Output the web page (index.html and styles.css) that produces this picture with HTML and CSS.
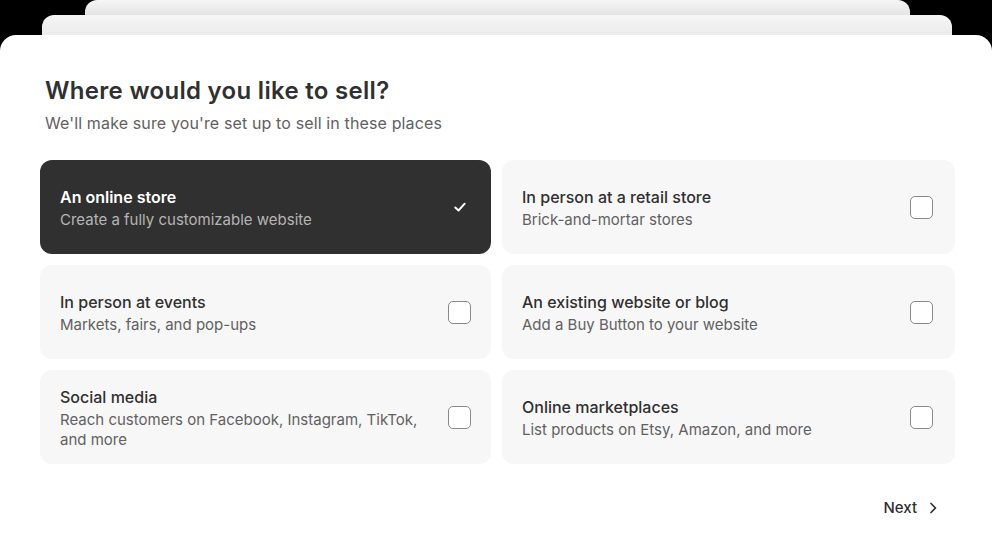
FILE: index.html
```html
<!DOCTYPE html>
<html>
<head>
<meta charset="utf-8">
<link rel="stylesheet" href="styles.css">
</head>
<body>
<div class="stack-back"></div>
<div class="stack-mid"></div>
<div class="sheet">
  <h1 class="title">Where would you like to sell?</h1>
  <p class="subtitle">We'll make sure you're set up to sell in these places</p>
  <div class="grid">
    <div class="option selected">
      <div class="text"><div class="name">An online store</div><div class="desc">Create a fully customizable website</div></div>
      <svg class="check" width="14" height="14" viewBox="0 0 14 14"><path d="M2.3 7.5 L5.5 10.5 L11.7 3.7" fill="none" stroke="#fff" stroke-width="2" stroke-linecap="round" stroke-linejoin="round"/></svg>
    </div>
    <div class="option">
      <div class="text"><div class="name">In person at a retail store</div><div class="desc">Brick-and-mortar stores</div></div>
      <span class="box"></span>
    </div>
    <div class="option">
      <div class="text"><div class="name">In person at events</div><div class="desc">Markets, fairs, and pop-ups</div></div>
      <span class="box"></span>
    </div>
    <div class="option">
      <div class="text"><div class="name">An existing website or blog</div><div class="desc">Add a Buy Button to your website</div></div>
      <span class="box"></span>
    </div>
    <div class="option">
      <div class="text"><div class="name">Social media</div><div class="desc">Reach customers on Facebook, Instagram, TikTok, and more</div></div>
      <span class="box"></span>
    </div>
    <div class="option">
      <div class="text"><div class="name">Online marketplaces</div><div class="desc">List products on Etsy, Amazon, and more</div></div>
      <span class="box"></span>
    </div>
  </div>
  <div class="footer">
    <button class="next">Next <svg width="16" height="16" viewBox="0 0 16 16"><path d="M6 3.5 L10.5 8 L6 12.5" fill="none" stroke="#303030" stroke-width="1.7" stroke-linecap="round" stroke-linejoin="round"/></svg></button>
  </div>
</div>
</body>
</html>
```
FILE: styles.css
```css
* { box-sizing: border-box; }
html, body { margin: 0; padding: 0; background: #000; height: 539px; overflow: hidden; }
body { font-family: Inter, "Noto Sans", sans-serif; color: #303030; }
.stack-back {
  height: 15px;
  margin: 0 82px 0 85px;
  border-radius: 12px 12px 0 0;
  background: linear-gradient(#f6f6f6, #e4e4e6);
}
.stack-mid {
  height: 20px;
  margin: 0 40px 0 42px;
  border-radius: 12px 12px 0 0;
  background: linear-gradient(#f6f6f6, #ebebec);
}
.sheet {
  background: #fff;
  border-radius: 16px 16px 0 0;
  height: 504px;
  padding: 40px 37px 0 40px;
}
.title {
  margin: 0 0 0 5px;
  font-size: 24px;
  font-weight: 600;
  line-height: 32px;
  letter-spacing: 0.3px;
  color: #303030;
}
.subtitle {
  margin: 4px 0 0 5px;
  font-size: 16px;
  line-height: 24px;
  letter-spacing: 0.13px;
  color: #616161;
}
.grid {
  margin-top: 25px;
  display: grid;
  grid-template-columns: 451px 453px;
  column-gap: 11px;
  row-gap: 11px;
}
.option {
  height: 94px;
  background: #f7f7f7;
  border-radius: 12px;
  padding: 3px 20px 0 20px;
  display: flex;
  align-items: center;
  justify-content: space-between;
}
.option:nth-child(even) { padding-right: 22px; }
.option.selected { background: #303030; }
.text { max-width: 370px; }
.name { font-size: 16px; font-weight: 500; line-height: 20px; color: #303030; }
.desc { font-size: 15px; line-height: 20px; color: #616161; margin-top: 3px; }
.selected .name { color: #fff; font-weight: 600; }
.selected .desc { color: #b5b5b5; }
.check { margin-right: 4px; margin-top: -3px; }
.box {
  width: 23px; height: 23px;
  border: 1.5px solid #8a8a8a;
  border-radius: 5px;
  background: #fff;
  flex: none;
  margin-top: -3px;
}
.footer { display: flex; justify-content: flex-end; margin-top: 34px; padding-right: 14px; }
.next {
  border: 0; background: none; padding: 0;
  font-family: inherit; font-size: 15px; font-weight: 500; color: #303030;
  display: flex; align-items: center; gap: 8px;
}
```
